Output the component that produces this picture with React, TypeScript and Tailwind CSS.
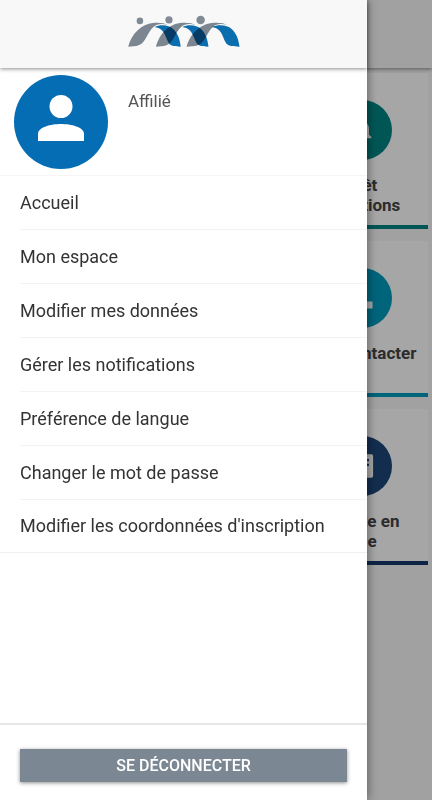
import React from "react"
import clsx from "clsx"

const menuItems = [
  "Accueil",
  "Mon espace",
  "Modifier mes données",
  "Gérer les notifications",
  "Préférence de langue",
  "Changer le mot de passe",
  "Modifier les coordonnées d'inscription",
]

interface Tile {
  title: string;
  circle: string;
  border: string;
  icon: React.ReactNode;
}

const tiles: Tile[] = [
  {
    title: "Arrêt cotisations",
    circle: "bg-[#008583]",
    border: "border-[#008583]",
    icon: <path d="M12 22a2 2 0 0 0 2-2h-4a2 2 0 0 0 2 2zm6-6v-5c0-3.100-1.600-5.600-4.500-6.300V4a1.500 1.500 0 0 0-3 0v.700C7.600 5.400 6 7.900 6 11v5l-2 2v1h16v-1l-2-2z" />,
  },
  {
    title: "Nous contacter",
    circle: "bg-[#009abc]",
    border: "border-[#009abc]",
    icon: <path d="M3 4h5v11h13v6H3z" />,
  },
  {
    title: "Compte en ligne",
    circle: "bg-[#1d4678]",
    border: "border-[#16386c]",
    icon: <path fillRule="evenodd" d="M4 2h16a1.500 1.500 0 0 1 1.500 1.500v17A1.500 1.500 0 0 1 20 22H4a1.500 1.500 0 0 1-1.500-1.500v-17A1.500 1.500 0 0 1 4 2zm10 4v2h4V6zm0 4v2h4v-2zM5 6v2h6V6z" />,
  },
]

const Logo = () => (
  <svg viewBox="51 42 342 98" className="h-8 w-[114px]" role="img" aria-label="Logo">
    <g fill="#808a94">
      <circle cx="87" cy="60" r="10" />
      <circle cx="176" cy="57" r="11" />
      <circle cx="273" cy="57" r="13" />
    </g>
    <g fill="#808a94" className="mix-blend-multiply">
      <path d="M51 139C62 100 91 68 132 66c18-1 30 1 40 6-17-4-34-3-43 6-22 20-22 47-46 57-9 4-21 3-32 4z" />
      <path d="M136 139C147 100 176 68 217 66c18-1 30 1 40 6-17-4-34-3-43 6-22 20-22 47-46 57-9 4-21 3-32 4z" />
      <path d="M230 139C241 100 272 68 314 66c18-1 30 1 40 6-17-4-34-3-43 6-22 20-22 47-47 57-9 4-23 3-34 4z" />
    </g>
    <g fill="#0a70b2" className="mix-blend-multiply">
      <path d="M132 79c16-8 42-8 57 6 15 14 20 32 23 54-11 0-20 0-29-4-18-9-13-52-51-56z" />
      <path d="M217 79c16-8 42-8 57 6 15 14 20 32 23 54-11 0-20 0-29-4-18-9-13-52-51-56z" />
      <path d="M307 79c18-8 46-8 61 6 15 14 21 32 24 54-11 0-24 0-33-4-20-9-13-52-52-56z" />
    </g>
  </svg>
)

const Dashboard = () => (
  <main className="min-h-screen bg-[#f7f7f7]">
    <div className="h-[68px] bg-[#f8f8f8] shadow-[0_1px_4px_rgba(0,0,0,0.45)]" />
    <div className="ml-auto flex w-1/3 flex-col gap-3 pt-[5px] pr-1">
      {tiles.map((tile) => (
        <section key={tile.title} className={clsx("flex h-[156px] flex-col items-center border-b-4 bg-white pt-[27px]", tile.border)}>
          <div className={clsx("mr-1 ml-3 flex size-[60px] shrink-0 items-center justify-center rounded-full", tile.circle)}>
            <svg viewBox="0 0 24 24" className="size-7" fill="#fff">{tile.icon}</svg>
          </div>
          <h2 className="mt-[15px] w-30 text-center text-[17px] leading-5 font-bold text-[#444]">{tile.title}</h2>
        </section>
      ))}
    </div>
  </main>
)

const SideMenu = () => (
  <aside className="fixed inset-y-0 left-0 flex w-[85%] flex-col bg-white shadow-[0_0_10px_rgba(0,0,0,0.5)]">
    <header className="flex h-[68px] shrink-0 items-start justify-center bg-[#f8f8f8] pt-[15px] shadow-[0_1px_4px_rgba(0,0,0,0.45)]">
      <Logo />
    </header>
    <div className="flex h-[108px] shrink-0 border-b border-[#f4f4f4] px-[14px] pt-[7px]">
      <div className="flex size-[94px] items-center justify-center rounded-full bg-[#056db3] pb-2">
        <svg viewBox="0 0 46 46" className="size-[46px]" fill="#fff">
          <circle cx="23" cy="11.500" r="11.500" />
          <path d="M0 46v-7c0-7 13-10 23-10s23 3 23 10v7z" />
        </svg>
      </div>
      <p className="mt-4 ml-5 text-[17px] leading-5 text-[#555]">Affilié</p>
    </div>
    <nav>
      <ul className="border-b border-[#f0f0f0]">
        {menuItems.map((item, index) => (
          <li key={item} className="pl-5">
            <a href="#" className={clsx("flex items-center text-lg text-[#333]", index < menuItems.length - 1 ? "h-[54px] border-b border-[#f3f3f3]" : "h-[52px]")}>{item}</a>
          </li>
        ))}
      </ul>
    </nav>
    <footer className="mt-auto border-t-2 border-[#e6e6e6] px-5 pt-6 pb-[18px]">
      <button type="button" className="h-[33px] w-full bg-[#7b8793] text-base font-medium text-white shadow-[0_1px_4px_rgba(0,0,0,0.45)]">SE DÉCONNECTER</button>
    </footer>
  </aside>
)

export default function App() {
  return (
    <div className="relative font-['Roboto',sans-serif]">
      <Dashboard />
      <div className="fixed inset-0 bg-black/35" />
      <SideMenu />
    </div>
  )
}
